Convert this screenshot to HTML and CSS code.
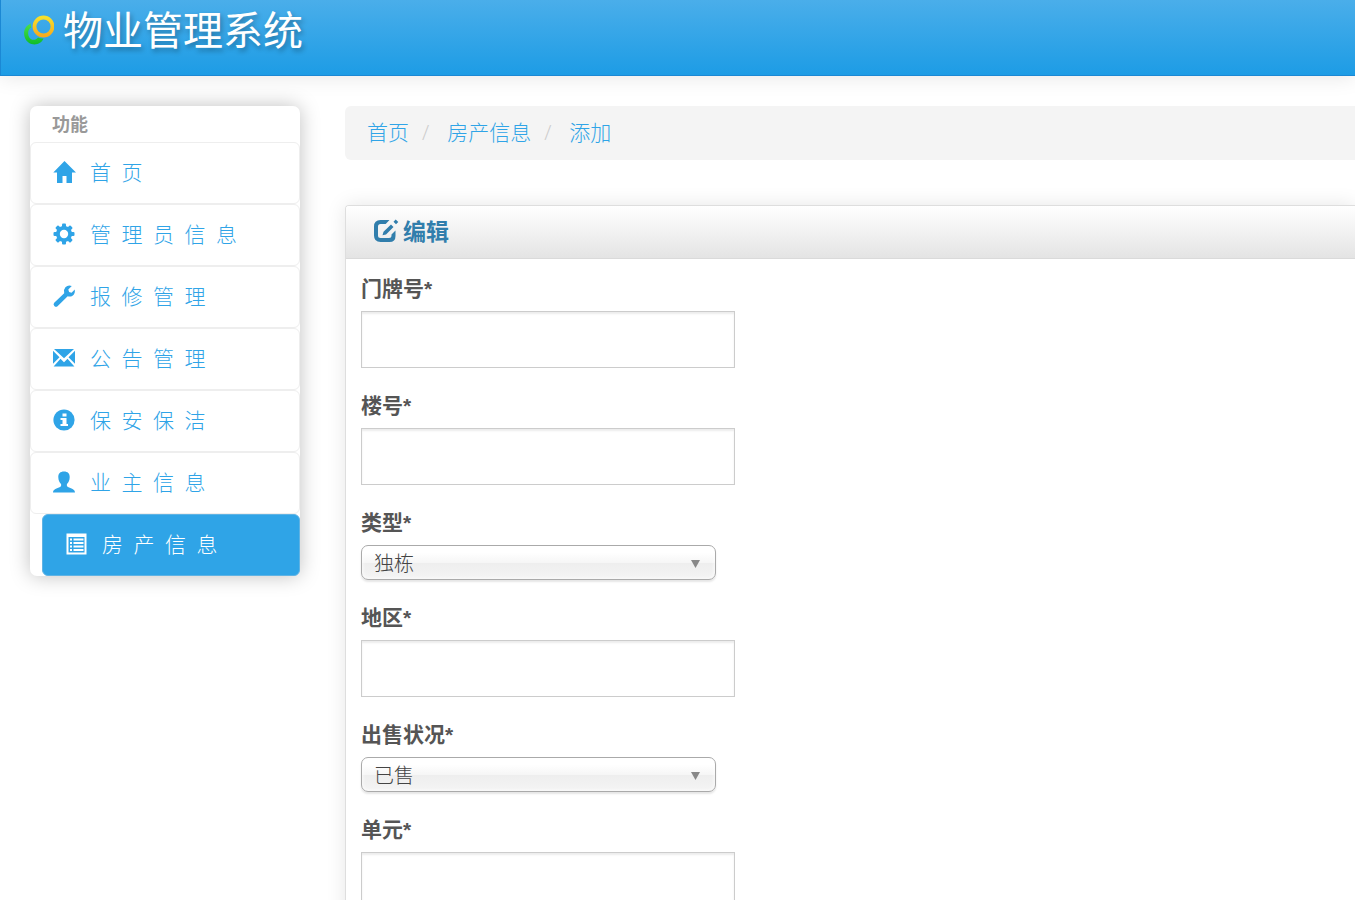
FILE: index.html
```html
<!DOCTYPE html>
<html lang="zh-CN">
<head>
<meta charset="utf-8">
<meta name="viewport" content="width=device-width, initial-scale=1">
<title>物业管理系统</title>
<link rel="stylesheet" href="styles.css">
</head>
<body>
<header class="navbar">
  <a class="brand" href="#">
    <svg class="brand-logo" viewBox="0 0 30 30" aria-hidden="true">
      <defs>
        <linearGradient id="green" x1="0" y1="0" x2="0" y2="1"><stop offset="0" stop-color="#4be04a"/><stop offset="1" stop-color="#10bd28"/></linearGradient>
        <linearGradient id="gold" x1="0" y1="0" x2="0" y2="1"><stop offset="0" stop-color="#f6e02c"/><stop offset="1" stop-color="#f7ac1e"/></linearGradient>
      </defs>
      <path d="M7 8.500C-1.500 11.500-2 23 4.500 27.500C10 31.500 17.500 29 19.500 23.500Q16.500 23.800 14 22.500C11.500 26 6.500 25.500 4.800 21.500C3.300 18 4.500 13.500 7.300 12.500Q6.500 10.500 7 8.500Z" fill="url(#green)"/>
      <circle cx="19.500" cy="11.500" r="9" fill="none" stroke="url(#gold)" stroke-width="3.800"/>
    </svg>
    <span class="brand-name">物业管理系统</span>
  </a>
</header>
<div class="page">
  <nav class="sidebar" aria-label="功能">
    <h2 class="nav-header">功能</h2>
    <ul class="menu">
      <li><a class="menu-link" href="#"><svg class="icon" viewBox="0 0 22 22" aria-hidden="true"><path d="M11.500 0L23 11.500H19V22H13.500V15H9.500V22H4V11.500H0.300Z"/></svg><span>首&#8194;页</span></a></li>
      <li><a class="menu-link" href="#"><svg class="icon" viewBox="0 0 22 22" aria-hidden="true"><g><rect x="9" y="0.500" width="4" height="21" rx="1"/><rect x="9" y="0.500" width="4" height="21" rx="1" transform="rotate(45 11 11)"/><rect x="9" y="0.500" width="4" height="21" rx="1" transform="rotate(90 11 11)"/><rect x="9" y="0.500" width="4" height="21" rx="1" transform="rotate(135 11 11)"/><circle cx="11" cy="11" r="8"/></g><circle class="icon-hole" cx="11" cy="11" r="4.200"/></svg><span>管&#8194;理&#8194;员&#8194;信&#8194;息</span></a></li>
      <li><a class="menu-link" href="#"><svg class="icon" viewBox="0 0 22 22" aria-hidden="true"><path d="M18.800 1.100L15.300 4.500L16.100 7L18.500 7.700L21.800 4.500Q22.300 9 19.500 10.700Q17.500 12 14.700 11.300L4.500 21.200Q3 22.500 1.300 20.900Q-0.200 19.300 1.200 17.800L11.200 8.200Q10.300 4.700 12.400 2.300Q15.200-0.500 18.800 1.100Z"/></svg><span>报&#8194;修&#8194;管&#8194;理</span></a></li>
      <li><a class="menu-link" href="#"><svg class="icon" viewBox="0 0 22 22" aria-hidden="true"><path d="M1 2H21L11 11.200ZM0 3.800L6.500 10.300L0 16.800ZM22 3.800V16.800L15.500 10.300ZM7.500 11.800L11 15.300L14.500 11.800L21.400 19.500H0.600Z"/></svg><span>公&#8194;告&#8194;管&#8194;理</span></a></li>
      <li><a class="menu-link" href="#"><svg class="icon" viewBox="0 0 22 22" aria-hidden="true"><circle cx="11" cy="11" r="10.600"/><path class="icon-hole" d="M9.500 4.500H13.500V7.500H9.500ZM7.500 9H13.500V15H15V17H7.500V15H9.500V11H7.500Z"/></svg><span>保&#8194;安&#8194;保&#8194;洁</span></a></li>
      <li><a class="menu-link" href="#"><svg class="icon" viewBox="0 0 22 22" aria-hidden="true"><path d="M11 0.500C14.800 0.500 16.800 2.600 16.700 6.200C16.600 9.500 15.500 11.200 14 12.900C13.500 14.500 14 15.600 15.500 16.300C19 18 21.900 18.500 22 21.500H0C0.100 18.500 3 18 6.500 16.300C8 15.600 8.500 14.500 8 12.900C6.500 11.200 5.400 9.500 5.300 6.200C5.200 2.600 7.200 0.500 11 0.500Z"/></svg><span>业&#8194;主&#8194;信&#8194;息</span></a></li>
      <li class="active"><a class="menu-link" href="#" aria-current="page"><svg class="icon" viewBox="0 0 22 22" aria-hidden="true"><path fill-rule="evenodd" d="M1.500 0.500H21.500V21.500H1.500ZM3.500 4V19.500H19.500V4ZM5 5.500H7V7.500H5ZM8.500 5.500H18.500V7.500H8.500ZM5 9H7V11H5ZM8.500 9H18.500V11H8.500ZM5 12.500H7V14.500H5ZM8.500 12.500H18.500V14.500H8.500ZM5 16H7V18H5ZM8.500 16H18.500V18H8.500Z"/></svg><span>房&#8194;产&#8194;信&#8194;息</span></a></li>
    </ul>
  </nav>
  <main class="content">
    <ol class="breadcrumb">
      <li><a href="#">首页</a></li>
      <li><a href="#">房产信息</a></li>
      <li><a href="#">添加</a></li>
    </ol>
    <section class="box">
      <h2 class="box-header">
        <svg class="edit-icon" viewBox="0 0 24 22" aria-hidden="true"><path d="M15.500 0L11.700 4H6.500Q4 4 4 6.500V15.500Q4 18 6.500 18H15Q17.500 18 17.500 15.500V14.500L21.500 10.500V16Q21.500 22 15.500 22H6.500Q0 22 0 15.500V6.500Q0 0 6.500 0ZM17 4.500L19.500 7L12 14.500L8.500 15.300L9.500 11.800ZM21.700-0.500L24.300 2.100L22 4.200L19.500 1.700Z"/></svg>
        <span>编辑</span>
      </h2>
      <form class="form">
        <div class="field"><label for="door">门牌号*</label><input id="door" type="text"></div>
        <div class="field"><label for="building">楼号*</label><input id="building" type="text"></div>
        <div class="field"><label for="kind">类型*</label><select id="kind"><option>独栋</option></select></div>
        <div class="field"><label for="area">地区*</label><input id="area" type="text"></div>
        <div class="field"><label for="sale">出售状况*</label><select id="sale"><option>已售</option></select></div>
        <div class="field"><label for="unit">单元*</label><input id="unit" type="text"></div>
      </form>
    </section>
  </main>
</div>
</body>
</html>
```
FILE: styles.css
```css
* { box-sizing: border-box; }

html { scrollbar-width: none; }

body {
  margin: 0;
  background: #fff;
  color: #555;
  font-family: "Open Sans", "Noto Sans CJK SC", sans-serif;
  font-size: 21px;
  font-weight: 300;
  line-height: 30px;
}

a { color: #2fa4e7; text-decoration: none; }
ul, ol { list-style: none; margin: 0; padding: 0; }
h2 { margin: 0; }

/* Top bar */
.navbar {
  height: 76px;
  padding: 5px 23px;
  border: solid #1b88d4;
  border-width: 0 0 1px 1px;
  background: linear-gradient(#4aaeea, #1d9ce5);
  box-shadow: 0 1px 20px rgba(0, 0, 0, 0.1);
}
.brand {
  display: inline-flex;
  align-items: center;
  gap: 9px;
  color: #fff;
  font-family: "KaiTi", "Noto Sans CJK SC", sans-serif;
  font-size: 40px;
  font-weight: 400;
  line-height: 46px;
  text-shadow: 2px 3px 5px rgba(0, 0, 0, 0.3);
}
.brand-logo { width: 30px; height: 30px; }
.brand-name { padding-bottom: 3px; }

.page {
  display: flex;
  align-items: flex-start;
  gap: 45px;
  padding: 30px 0 0 30px;
}

/* Sidebar */
.sidebar {
  flex: 0 0 270px;
  border-radius: 7px;
  background: #fff;
  box-shadow: 0 0 20px rgba(0, 0, 0, 0.25);
}
.nav-header {
  padding: 3px 22px;
  color: #999;
  font-size: 18px;
  font-weight: 700;
}
.menu-link {
  display: flex;
  align-items: center;
  gap: 15px;
  height: 62px;
  padding: 0 22px 2px;
  border: 1px solid #eee;
  border-radius: 6px;
}
.active { padding-left: 12px; }
.active .menu-link {
  border-color: #5fb3e4;
  background: #2fa4e7;
  color: #fff;
}
.icon {
  flex: none;
  width: 22px;
  height: 22px;
  overflow: visible;
  fill: currentColor;
}
.icon-hole { fill: #fff; }

/* Main column */
.content { flex: 1; min-width: 0; }
.breadcrumb {
  display: flex;
  margin-bottom: 45px;
  padding: 11px 22px 13px;
  border-radius: 6px 0 0 6px;
  background: #f4f4f4;
}
.breadcrumb li + li::before {
  content: "/";
  padding: 0 18px 0 13px;
  color: #ccc;
}
.box {
  border: solid #dedede;
  border-width: 1px 0 0 1px;
  border-radius: 4px 0 0 0;
  box-shadow: 0 0 20px rgba(0, 0, 0, 0.1);
}
.box-header {
  display: flex;
  align-items: center;
  gap: 5px;
  height: 53px;
  padding: 0 28px 2px;
  border-bottom: 1px solid #dadada;
  border-radius: 3px 0 0 0;
  background: linear-gradient(#fff, #e4e4e4);
  color: #317eac;
  font-size: 23px;
  font-weight: 700;
}
.edit-icon { width: 24px; height: 22px; overflow: visible; fill: currentColor; }

.form {
  display: flex;
  flex-direction: column;
  gap: 23px;
  padding: 15px;
}
.field {
  display: flex;
  flex-direction: column;
  align-items: flex-start;
  gap: 8px;
}
.field label {
  font-family: "Liberation Sans", "Noto Sans CJK SC", sans-serif;
  font-weight: 700;
  line-height: 29px;
}
.field input {
  width: 374px;
  max-width: 100%;
  height: 57px;
  padding: 0 12px;
  border: 1px solid #ccc;
  background: #fff;
  box-shadow: inset 0 2px 2px rgba(0, 0, 0, 0.075);
  font: inherit;
}
.field select {
  appearance: none;
  width: 355px;
  max-width: 100%;
  height: 35px;
  padding: 2px 12px 0;
  border: 1px solid #aaa;
  border-radius: 7px;
  background:
    url("data:image/svg+xml,%3Csvg xmlns='http://www.w3.org/2000/svg' viewBox='0 0 9 8'%3E%3Cpath d='M0 0H9L4.500 8Z' fill='%23888'/%3E%3C/svg%3E") right 15px top 14px / 9px 8px no-repeat,
    linear-gradient(#fff 20%, #f6f6f6 50%, #eee 52%, #f4f4f4 100%);
  box-shadow: inset 0 0 4px #fff, 0 2px 2px rgba(0, 0, 0, 0.1);
  color: #444;
  font-family: inherit;
  font-size: 20px;
  font-weight: 300;
}
```
